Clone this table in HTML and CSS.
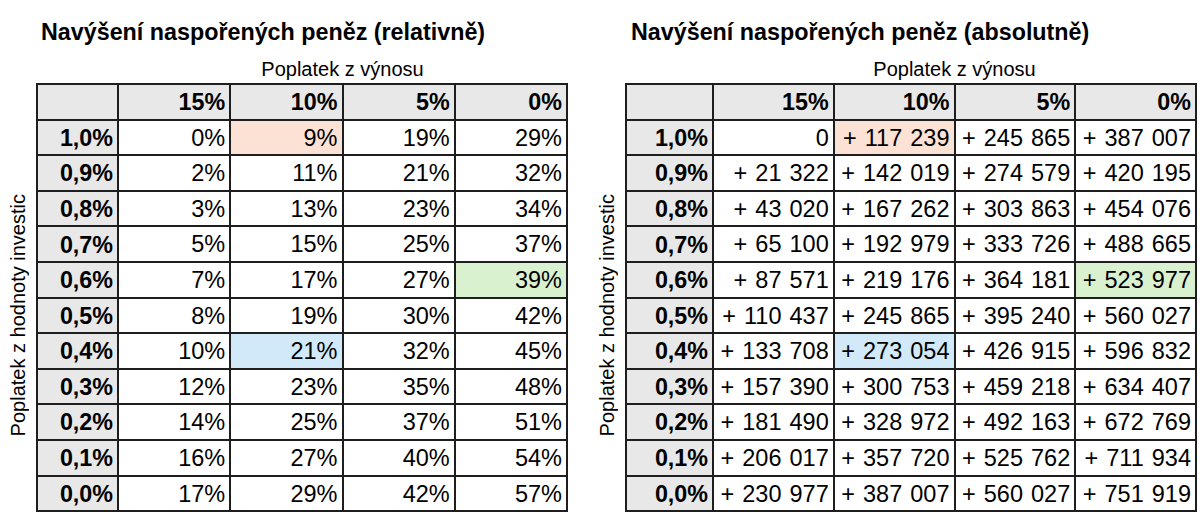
FILE: index.html
```html
<!DOCTYPE html>
<html lang="cs">
<head>
<meta charset="utf-8">
<title>Navýšení naspořených peněz</title>
<link rel="stylesheet" href="styles.css">
</head>
<body>
<div class="page">
  <section class="panel rel">
    <h2 class="title">Navýšení naspořených peněz (relativně)</h2>
    <div class="sub">Poplatek z výnosu</div>
    <div class="body">
      <div class="ylabel"><span>Poplatek z hodnoty investic</span></div>
      <table>
        <colgroup><col class="c0"><col><col><col><col></colgroup>
        <tr class="head"><th></th><th>15%</th><th>10%</th><th>5%</th><th>0%</th></tr>
        <tr><th>1,0%</th><td>0%</td><td class="orange">9%</td><td>19%</td><td>29%</td></tr>
        <tr><th>0,9%</th><td>2%</td><td>11%</td><td>21%</td><td>32%</td></tr>
        <tr><th>0,8%</th><td>3%</td><td>13%</td><td>23%</td><td>34%</td></tr>
        <tr><th>0,7%</th><td>5%</td><td>15%</td><td>25%</td><td>37%</td></tr>
        <tr><th>0,6%</th><td>7%</td><td>17%</td><td>27%</td><td class="green">39%</td></tr>
        <tr><th>0,5%</th><td>8%</td><td>19%</td><td>30%</td><td>42%</td></tr>
        <tr><th>0,4%</th><td>10%</td><td class="blue">21%</td><td>32%</td><td>45%</td></tr>
        <tr><th>0,3%</th><td>12%</td><td>23%</td><td>35%</td><td>48%</td></tr>
        <tr><th>0,2%</th><td>14%</td><td>25%</td><td>37%</td><td>51%</td></tr>
        <tr><th>0,1%</th><td>16%</td><td>27%</td><td>40%</td><td>54%</td></tr>
        <tr><th>0,0%</th><td>17%</td><td>29%</td><td>42%</td><td>57%</td></tr>
      </table>
    </div>
  </section>
  <section class="panel abs">
    <h2 class="title">Navýšení naspořených peněz (absolutně)</h2>
    <div class="sub">Poplatek z výnosu</div>
    <div class="body">
      <div class="ylabel"><span>Poplatek z hodnoty investic</span></div>
      <table>
        <colgroup><col class="c0"><col><col><col><col></colgroup>
        <tr class="head"><th></th><th>15%</th><th>10%</th><th>5%</th><th>0%</th></tr>
        <tr><th>1,0%</th><td>0</td><td class="orange">+&nbsp;117&nbsp;239</td><td>+&nbsp;245&nbsp;865</td><td>+&nbsp;387&nbsp;007</td></tr>
        <tr><th>0,9%</th><td>+&nbsp;21&nbsp;322</td><td>+&nbsp;142&nbsp;019</td><td>+&nbsp;274&nbsp;579</td><td>+&nbsp;420&nbsp;195</td></tr>
        <tr><th>0,8%</th><td>+&nbsp;43&nbsp;020</td><td>+&nbsp;167&nbsp;262</td><td>+&nbsp;303&nbsp;863</td><td>+&nbsp;454&nbsp;076</td></tr>
        <tr><th>0,7%</th><td>+&nbsp;65&nbsp;100</td><td>+&nbsp;192&nbsp;979</td><td>+&nbsp;333&nbsp;726</td><td>+&nbsp;488&nbsp;665</td></tr>
        <tr><th>0,6%</th><td>+&nbsp;87&nbsp;571</td><td>+&nbsp;219&nbsp;176</td><td>+&nbsp;364&nbsp;181</td><td class="green">+&nbsp;523&nbsp;977</td></tr>
        <tr><th>0,5%</th><td>+&nbsp;110&nbsp;437</td><td>+&nbsp;245&nbsp;865</td><td>+&nbsp;395&nbsp;240</td><td>+&nbsp;560&nbsp;027</td></tr>
        <tr><th>0,4%</th><td>+&nbsp;133&nbsp;708</td><td class="blue">+&nbsp;273&nbsp;054</td><td>+&nbsp;426&nbsp;915</td><td>+&nbsp;596&nbsp;832</td></tr>
        <tr><th>0,3%</th><td>+&nbsp;157&nbsp;390</td><td>+&nbsp;300&nbsp;753</td><td>+&nbsp;459&nbsp;218</td><td>+&nbsp;634&nbsp;407</td></tr>
        <tr><th>0,2%</th><td>+&nbsp;181&nbsp;490</td><td>+&nbsp;328&nbsp;972</td><td>+&nbsp;492&nbsp;163</td><td>+&nbsp;672&nbsp;769</td></tr>
        <tr><th>0,1%</th><td>+&nbsp;206&nbsp;017</td><td>+&nbsp;357&nbsp;720</td><td>+&nbsp;525&nbsp;762</td><td>+&nbsp;711&nbsp;934</td></tr>
        <tr><th>0,0%</th><td>+&nbsp;230&nbsp;977</td><td>+&nbsp;387&nbsp;007</td><td>+&nbsp;560&nbsp;027</td><td>+&nbsp;751&nbsp;919</td></tr>
      </table>
    </div>
  </section>
</div>
</body>
</html>
```

FILE: styles.css
```css
html, body {
  margin: 0;
  background: #ffffff;
}

body {
  font-family: "Liberation Sans", Arial, sans-serif;
  color: #000000;
}

.page {
  display: flex;
  gap: 22px;
}

.panel {
  --lab: 36px;
  --first: 81px;
  --tw: 532px;
}

.panel.abs {
  --lab: 35px;
  --first: 87px;
  --tw: 572px;
}

.title {
  margin: 18px 0 0 41px;
  font-size: 23.3px;
  font-weight: 700;
  line-height: 28px;
  white-space: nowrap;
}

.sub {
  margin: 11px 0 0 calc(var(--lab) + var(--first));
  width: calc(var(--tw) - var(--first));
  text-align: center;
  font-size: 20px;
  line-height: 24px;
  white-space: nowrap;
}

.body {
  display: flex;
  margin-top: 2px;
}

.ylabel {
  width: var(--lab);
  flex: none;
  display: flex;
  align-items: center;
  justify-content: center;
  padding-top: 36px;
  box-sizing: border-box;
}

.ylabel span {
  writing-mode: vertical-rl;
  transform: rotate(180deg);
  font-size: 20px;
  line-height: 23px;
  white-space: nowrap;
}

table {
  width: var(--tw);
  border-collapse: collapse;
  table-layout: fixed;
}

col.c0 {
  width: var(--first);
}

tr {
  height: 35.6px;
}

th, td {
  border: 2px solid #1e1e1e;
  padding: 2px 4px 0 0;
  text-align: right;
  vertical-align: middle;
  white-space: nowrap;
  line-height: 1;
}

td {
  font-size: 23.5px;
  font-weight: 400;
  word-spacing: 1.5px;
}

th {
  font-size: 23.3px;
  font-weight: 700;
  background: #e8e8e8;
}

.orange {
  background: #fbe2d5;
}

.green {
  background: #daf1d0;
}

.blue {
  background: #d1e9f8;
}
```
